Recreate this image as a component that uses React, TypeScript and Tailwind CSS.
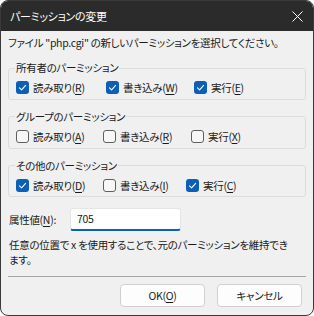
import React from 'react';

const font = { fontFamily: '"Noto Sans CJK JP", "Noto Sans", sans-serif', fontFeatureSettings: '"palt"' };

type Item = { label: string; key: string; checked: boolean; w: string };

function Check({ checked }: { checked: boolean }) {
  if (checked) {
    return (
      <span className="flex h-[13px] w-[13px] shrink-0 items-center justify-center rounded-[3px] bg-[#0a5fb6]">
        <svg width="9" height="9" viewBox="0 0 9 9" fill="none">
          <path d="M1.5 4.8 L3.6 6.8 L7.6 2.4" stroke="#ffffff" strokeWidth="1.1" strokeLinecap="round" strokeLinejoin="round" />
        </svg>
      </span>
    );
  }
  return <span className="h-[13px] w-[13px] shrink-0 rounded-[3px] border border-[#5f5f5f] bg-[#f7f7f7]" />;
}

function Mnemonic({ label, k }: { label: string; k: string }) {
  return (
    <span>
      {label}(<span className="underline underline-offset-2">{k}</span>)
    </span>
  );
}

function Group({ title, items }: { title: string; items: Item[] }) {
  return (
    <fieldset className="mt-[9px] rounded-[3px] border border-[#dcdcdc] px-[7px] pb-[3px]">
      <legend className="-ml-[1px] px-[1px] leading-[16px]">{title}</legend>
      <div className="mt-[4px] flex items-center">
        {items.map((it) => (
          <div key={it.key} className={`flex items-center gap-[4px] ${it.w}`}>
            <Check checked={it.checked} />
            <Mnemonic label={it.label} k={it.key} />
          </div>
        ))}
      </div>
    </fieldset>
  );
}

export default function App() {
  return (
    <div className="h-[316px] w-[314px] bg-white text-[10.5px] tracking-[-0.3px] text-[#1a1a1a]" style={font}>
      <div className="flex h-full flex-col overflow-hidden rounded-[8px] border border-[#3a3a3a] bg-[#f0f0f0]">
        <div className="flex h-[30px] shrink-0 items-center justify-between bg-[#2b2b2b] pl-[9px] pr-[9px] text-white">
          <span className="text-[11px] leading-[16px]">パーミッションの変更</span>
          <svg width="11" height="11" viewBox="0 0 11 11" className="mr-[1px]">
            <path d="M0.5 0.5 L10.5 10.5 M10.5 0.5 L0.5 10.5" stroke="#ffffff" strokeWidth="1" />
          </svg>
        </div>

        <div className="flex flex-1 flex-col px-[7px]">
          <p className="mt-[4px] leading-[16px]">ファイル "php.cgi" の新しいパーミッションを選択してください。</p>

          <div>
            <Group
              title="所有者のパーミッション"
              items={[
                { label: '読み取り', key: 'R', checked: true, w: 'w-[90px]' },
                { label: '書き込み', key: 'W', checked: true, w: 'w-[88px]' },
                { label: '実行', key: 'E', checked: true, w: '' },
              ]}
            />
            <Group
              title="グループのパーミッション"
              items={[
                { label: '読み取り', key: 'A', checked: false, w: 'w-[87px]' },
                { label: '書き込み', key: 'R', checked: false, w: 'w-[88px]' },
                { label: '実行', key: 'X', checked: false, w: '' },
              ]}
            />
            <Group
              title="その他のパーミッション"
              items={[
                { label: '読み取り', key: 'D', checked: true, w: 'w-[87px]' },
                { label: '書き込み', key: 'I', checked: false, w: 'w-[83px]' },
                { label: '実行', key: 'C', checked: true, w: '' },
              ]}
            />
          </div>

          <div className="mt-[11px] flex items-center">
            <label className="w-[62px] pl-[1px] leading-[16px]">
              属性値(<span className="underline underline-offset-2">N</span>):
            </label>
            <div className="flex h-[23px] w-[111px] items-center rounded-[3px] border border-[#e5e5e5] border-b-2 border-b-[#0a5fb6] bg-white px-[6px]">
              705
            </div>
          </div>

          <p className="mt-[6px] pl-[1px] leading-[15px]">
            任意の位置で x を使用することで、元のパーミッションを維持でき
            <br />
            ます。
          </p>

          <div className="mt-[9px] h-px bg-[#a6a6a6]" />

          <div className="mt-[7px] flex justify-end gap-[12px] pr-[4px]">
            <button className="h-[23px] w-[85px] rounded-[4px] border border-[#d0d0d0] bg-[#fdfdfd] leading-[16px]">
              OK(<span className="underline underline-offset-2">O</span>)
            </button>
            <button className="h-[23px] w-[85px] rounded-[4px] border border-[#d0d0d0] bg-[#fdfdfd] leading-[16px]">
              キャンセル
            </button>
          </div>
        </div>
      </div>
    </div>
  );
}
